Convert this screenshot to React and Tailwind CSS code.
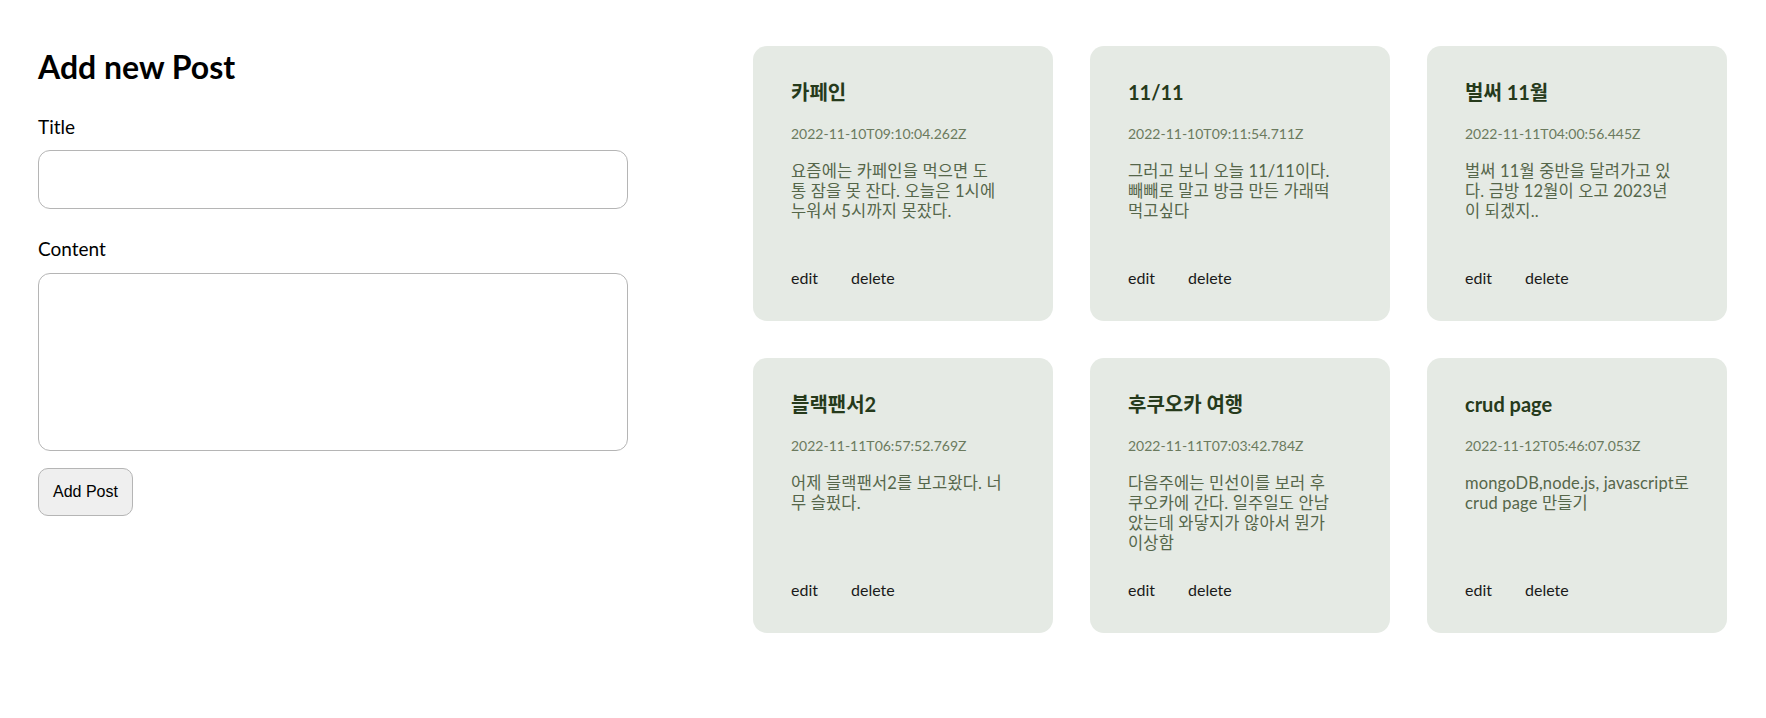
import React, { useState } from 'react';

const initialPosts = [
    {
        id: 1,
        title: '카페인',
        date: '2022-11-10T09:10:04.262Z',
        content: '요즘에는 카페인을 먹으면 도\n통 잠을 못 잔다. 오늘은 1시에\n누워서 5시까지 못잤다.'
    },
    {
        id: 2,
        title: '11/11',
        date: '2022-11-10T09:11:54.711Z',
        content: '그러고 보니 오늘 11/11이다.\n빼빼로 말고 방금 만든 가래떡\n먹고싶다'
    },
    {
        id: 3,
        title: '벌써 11월',
        date: '2022-11-11T04:00:56.445Z',
        content: '벌써 11월 중반을 달려가고 있\n다. 금방 12월이 오고 2023년\n이 되겠지..'
    },
    {
        id: 4,
        title: '블랙팬서2',
        date: '2022-11-11T06:57:52.769Z',
        content: '어제 블랙팬서2를 보고왔다. 너\n무 슬펐다.'
    },
    {
        id: 5,
        title: '후쿠오카 여행',
        date: '2022-11-11T07:03:42.784Z',
        content: '다음주에는 민선이를 보러 후\n쿠오카에 간다. 일주일도 안남\n았는데 와닿지가 않아서 뭔가\n이상함'
    },
    {
        id: 6,
        title: 'crud page',
        date: '2022-11-12T05:46:07.053Z',
        content: 'mongoDB,node.js, javascript로\ncrud page 만들기'
    }
];

const PostCard = ({ post, onDelete }) => (
    <div className="flex h-[275px] flex-col rounded-[14px] bg-[#e5eae4] px-[38px] pt-[32px] pb-[33px]">
        <h3 className="text-[20px] font-bold leading-[28px] text-[#263a1b]">{post.title}</h3>
        <p className="mt-[18px] text-[14px] leading-[20px] text-[#6b7a5e]">{post.date}</p>
        <p className="mt-[17px] whitespace-pre text-[16.5px] leading-[20px] tracking-[0.15px] text-[#55664a]">
            {post.content}
        </p>
        <div className="mt-auto flex gap-[33px] text-[16px] leading-[20px] text-[#1a1a1a]">
            <button className="cursor-pointer">edit</button>
            <button className="cursor-pointer" onClick={() => onDelete(post.id)}>delete</button>
        </div>
    </div>
);

export default function App() {
    const [posts, setPosts] = useState(initialPosts);
    const [title, setTitle] = useState('');
    const [content, setContent] = useState('');

    const addPost = () => {
        if (!title.trim()) return;
        setPosts([...posts, { id: Date.now(), title, date: new Date().toISOString(), content }]);
        setTitle('');
        setContent('');
    };

    return (
        <div className="flex min-h-screen bg-white font-['Lato','Noto_Sans_CJK_KR',sans-serif]">
            {/* form */}
            <div className="ml-[38px] w-[590px] shrink-0 pt-[47px]">
                <h1 className="text-[32px] font-bold leading-[40px] text-black">Add new Post</h1>
                <label className="mt-[28px] block text-[19px] leading-[24px] text-black">Title</label>
                <input
                    value={title}
                    onChange={(e) => setTitle(e.target.value)}
                    className="mt-[11px] block h-[59px] w-full rounded-[12px] border border-[#b5b5b5] px-3 outline-none"
                />
                <label className="mt-[28px] block text-[19px] leading-[24px] text-black">Content</label>
                <textarea
                    value={content}
                    onChange={(e) => setContent(e.target.value)}
                    className="mt-[12px] block h-[178px] w-full resize-none rounded-[12px] border border-[#b5b5b5] p-3 outline-none"
                />
                <button
                    onClick={addPost}
                    className="mt-[17px] h-[48px] w-[95px] rounded-[10px] border border-[#b5b5b5] bg-[#efefef] font-['Liberation_Sans',Arial,sans-serif] text-[16px] text-black"
                >
                    Add Post
                </button>
            </div>

            {/* posts */}
            <div className="ml-[125px] grid grid-cols-[repeat(3,300px)] content-start gap-[37px] pt-[46px]">
                {posts.map((post) => (
                    <PostCard key={post.id} post={post} onDelete={(id) => setPosts(posts.filter((p) => p.id !== id))} />
                ))}
            </div>
        </div>
    );
}
